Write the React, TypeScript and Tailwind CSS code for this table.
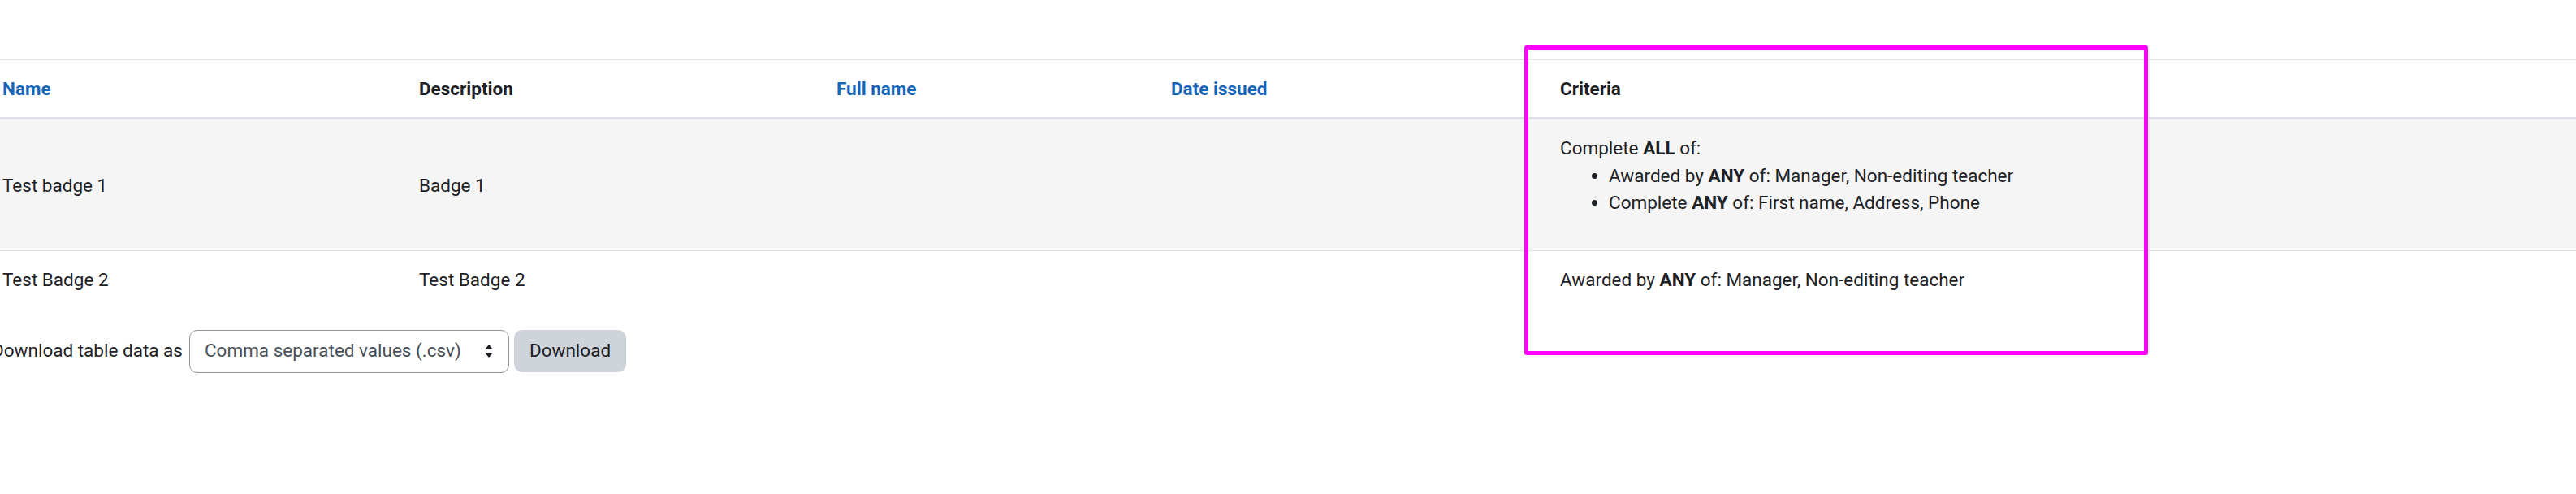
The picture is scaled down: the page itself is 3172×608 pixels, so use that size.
import { useState } from 'react';

interface BadgeRow {
  name: string;
  description: string;
  fullName: string;
  dateIssued: string;
  criteria: React.ReactNode;
}

const ROWS: BadgeRow[] = [
  {
    name: 'Test badge 1',
    description: 'Badge 1',
    fullName: '',
    dateIssued: '',
    criteria: (
      <>
        <div>
          Complete <strong className="font-bold">ALL</strong> of:
        </div>
        <ul className="mb-[24px] list-disc pl-[60px]">
          <li>
            Awarded by <strong className="font-bold">ANY</strong> of: Manager, Non-editing teacher
          </li>
          <li>
            Complete <strong className="font-bold">ANY</strong> of: First name, Address, Phone
          </li>
        </ul>
      </>
    ),
  },
  {
    name: 'Test Badge 2',
    description: 'Test Badge 2',
    fullName: '',
    dateIssued: '',
    criteria: (
      <div>
        Awarded by <strong className="font-bold">ANY</strong> of: Manager, Non-editing teacher
      </div>
    ),
  },
];

function SortArrows() {
  return (
    <svg width="12" height="18" viewBox="0 0 12 18" className="pointer-events-none absolute right-[19px] top-1/2 -translate-y-1/2">
      <path d="M6 1 L11 7 L1 7 Z" fill="#1d2125" />
      <path d="M6 17 L11 11 L1 11 Z" fill="#1d2125" />
    </svg>
  );
}

export default function App() {
  const [format, setFormat] = useState('csv');

  return (
    <div
      className="relative h-[608px] w-[3172px] overflow-hidden bg-white text-[22.5px] leading-[33.75px] text-[#1d2125]"
      style={{ fontFamily: 'Roboto, "Liberation Sans", sans-serif' }}
    >
      <div className="ml-[-15px] pt-[73px]">
        <table className="mb-[27px] w-[3187px] table-fixed border-collapse border-t border-[#dee2e6]">
          <colgroup>
            <col className="w-[513px]" />
            <col className="w-[514px]" />
            <col className="w-[412px]" />
            <col className="w-[479px]" />
            <col />
          </colgroup>
          <thead>
            <tr className="border-b-[3px] border-[#dee2e6]">
              <th className="px-[18px] pb-[17px] pt-[19px] text-left align-bottom font-bold">
                <a className="text-[#1565b8]">Name</a>
              </th>
              <th className="px-[18px] pb-[17px] pt-[19px] text-left align-bottom font-bold">Description</th>
              <th className="px-[18px] pb-[17px] pt-[19px] text-left align-bottom font-bold">
                <a className="text-[#1565b8]">Full name</a>
              </th>
              <th className="px-[18px] pb-[17px] pt-[19px] text-left align-bottom font-bold">
                <a className="text-[#1565b8]">Date issued</a>
              </th>
              <th className="px-[18px] pb-[17px] pt-[19px] text-left align-bottom font-bold">Criteria</th>
            </tr>
          </thead>
          <tbody>
            {ROWS.map((row, i) => (
              <tr
                key={row.name}
                className={`${i % 2 === 0 ? 'bg-[#f5f5f5]' : 'bg-white'} ${i > 0 ? 'border-t border-[#dee2e6]' : ''}`}
              >
                <td className="px-[18px] pb-[17px] pt-[19px] align-middle">{row.name}</td>
                <td className="px-[18px] pb-[17px] pt-[19px] align-middle">{row.description}</td>
                <td className="px-[18px] pb-[17px] pt-[19px] align-middle">{row.fullName}</td>
                <td className="px-[18px] pb-[17px] pt-[19px] align-middle">{row.dateIssued}</td>
                <td className="px-[18px] pb-[17px] pt-[19px] align-middle">{row.criteria}</td>
              </tr>
            ))}
          </tbody>
        </table>

        {/* Download form */}
        <div className="ml-[5px] flex items-center">
          <label className="mr-[8px] whitespace-nowrap">Download table data as</label>
          <div className="relative">
            <select
              value={format}
              onChange={(e) => setFormat(e.target.value)}
              className="h-[53px] w-[394px] appearance-none rounded-[10px] border border-[#8f959e] bg-white pl-[18px] pr-[48px] text-[22.5px] text-[#495057]"
              style={{ fontFamily: 'Roboto, "Liberation Sans", sans-serif' }}
            >
              <option value="csv">Comma separated values (.csv)</option>
              <option value="xlsx">Microsoft Excel (.xlsx)</option>
              <option value="html">HTML table</option>
            </select>
            <SortArrows />
          </div>
          <button className="ml-[6px] h-[52px] rounded-[10px] bg-[#ced4da] px-[19px] text-[22.5px] text-[#1d2125]">
            Download
          </button>
        </div>
      </div>

      {/* highlight overlay */}
      <div className="pointer-events-none absolute left-[1877px] top-[56px] h-[381px] w-[768px] rounded-[3px] border-[5px] border-[#ff00ff]" />
    </div>
  );
}
